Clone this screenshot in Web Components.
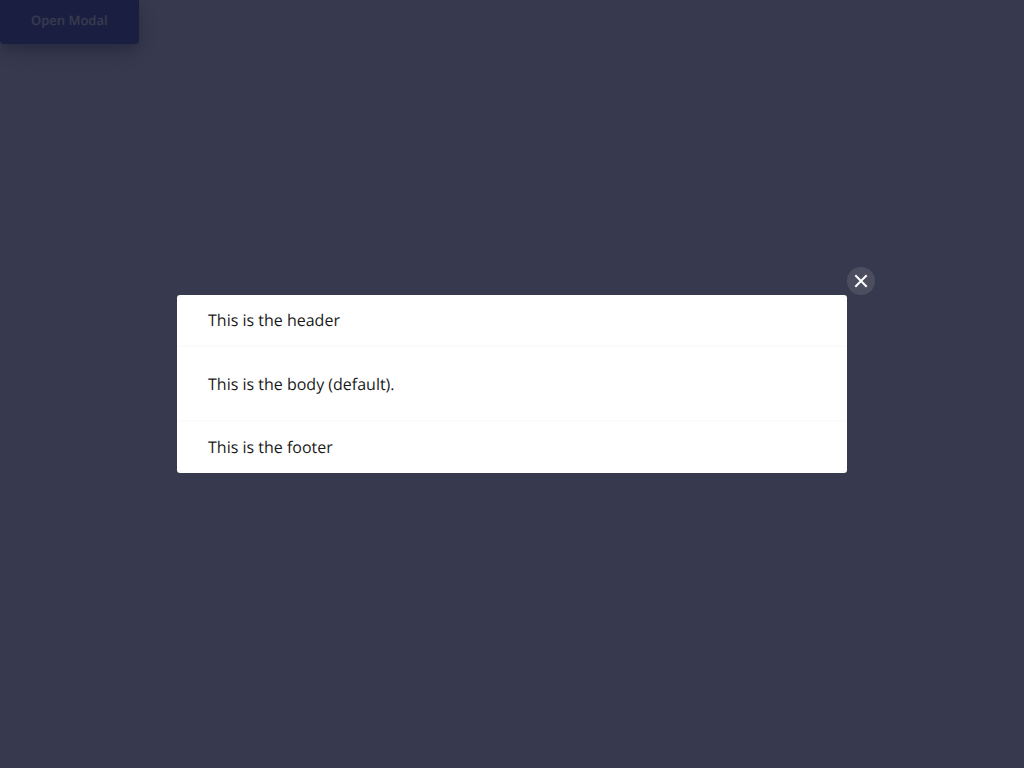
<!DOCTYPE html>
<html lang="en">
<head>
<meta charset="utf-8">
<meta name="viewport" content="width=device-width, initial-scale=1">
<title>Modal</title>
<style>
body { margin: 0; min-height: 100vh; background: #fff; color: #1a1a1a; font: 16px/22px "Open Sans", sans-serif; text-rendering: geometricPrecision; }
</style>
</head>
<body>
<action-button>Open Modal</action-button>
<modal-dialog open>
  <span slot="header">This is the header</span>
  This is the body (default).
  <span slot="footer">This is the footer</span>
</modal-dialog>
<script>
class ActionButton extends HTMLElement {
  constructor() {
    super();
    this.attachShadow({ mode: 'open' }).innerHTML = `
      <style>
        :host { display: block; }
        button {
          display: block; margin: 0; border: 0; border-radius: 0 0 4px 4px;
          padding: 11px 31px 15px;
          background: #3f49a6; color: #fff;
          font: 600 13px/18px "Open Sans", sans-serif;
          text-rendering: inherit;
          box-shadow: 0 8px 28px rgba(0, 0, 0, .3), 0 4px 10px rgba(0, 0, 0, .22);
          cursor: pointer;
        }
      </style>
      <button type="button"><slot></slot></button>`;
  }
}

class ModalDialog extends HTMLElement {
  constructor() {
    super();
    this.attachShadow({ mode: 'open' }).innerHTML = `
      <style>
        :host { display: none; }
        :host([open]) {
          display: flex; align-items: center; justify-content: center;
          position: fixed; inset: 0; padding: 32px; box-sizing: border-box;
          background: rgba(20, 23, 47, .85);
        }
        .panel {
          position: relative; width: 100%; max-width: 670px;
          background: #fff; border-radius: 3px;
        }
        header { padding: 14px 31px; border-bottom: 2px solid #fbfbfb; }
        .body { padding: 26px 31px 25px; }
        footer { padding: 14px 31px 15px; border-top: 2px solid #fbfbfb; }
        .close {
          position: absolute; left: 100%; bottom: 100%;
          display: flex; align-items: center; justify-content: center;
          width: 28px; height: 28px; padding: 0; border: 0; border-radius: 50%;
          background: rgba(255, 255, 255, .1); color: #fff; cursor: pointer;
        }
      </style>
      <div class="panel" role="dialog" aria-modal="true" aria-labelledby="title">
        <button class="close" type="button" aria-label="Close">
          <svg width="14" height="14" viewBox="0 0 14 14" fill="none" stroke="currentColor" stroke-width="2" aria-hidden="true"><path d="M1.3 1.3 12.7 12.7M12.7 1.3 1.3 12.7"/></svg>
        </button>
        <header id="title"><slot name="header"></slot></header>
        <div class="body"><slot></slot></div>
        <footer><slot name="footer"></slot></footer>
      </div>`;
    this.shadowRoot.querySelector('.close').addEventListener('click', () => this.removeAttribute('open'));
  }
}
customElements.define('action-button', ActionButton);
customElements.define('modal-dialog', ModalDialog);
document.querySelector('action-button').addEventListener('click', () =>
  document.querySelector('modal-dialog').setAttribute('open', ''));
</script>
</body>
</html>
